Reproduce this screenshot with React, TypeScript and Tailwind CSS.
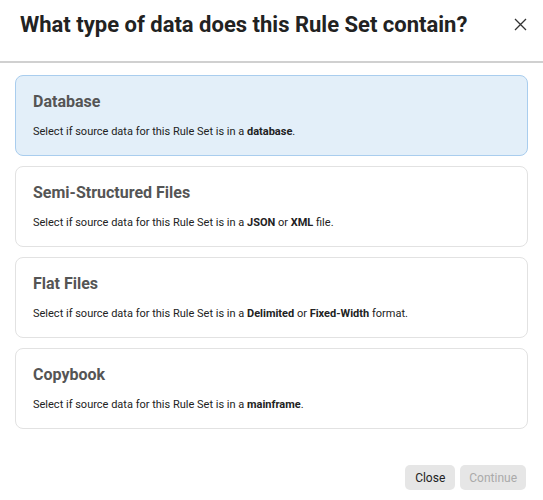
import React, { useState } from 'react';

type Option = {
    id: string;
    title: string;
    body: React.ReactNode;
};

const options: Option[] = [
    {
        id: 'database',
        title: 'Database',
        body: <>Select if source data for this Rule Set is in a <b>database</b>.</>,
    },
    {
        id: 'semi',
        title: 'Semi-Structured Files',
        body: <>Select if source data for this Rule Set is in a <b>JSON</b> or <b>XML</b> file.</>,
    },
    {
        id: 'flat',
        title: 'Flat Files',
        body: <>Select if source data for this Rule Set is in a <b>Delimited</b> or <b>Fixed-Width</b> format.</>,
    },
    {
        id: 'copybook',
        title: 'Copybook',
        body: <>Select if source data for this Rule Set is in a <b>mainframe</b>.</>,
    },
];

export default function App() {
    const [selected, setSelected] = useState('database');

    return (
        <div className="w-[543px] h-[500px] bg-white flex flex-col font-['Roboto',sans-serif] text-[#222]">
            {/* Header */}
            <div className="flex items-center justify-between pl-5 pr-[16px] pb-[12px] h-[63px] shrink-0 border-b-2 border-[#d0d0d0]">
                <h2 className="text-[22px] leading-[28px] font-bold text-[#222] whitespace-nowrap">
                    What type of data does this Rule Set contain?
                </h2>
                <button className="w-[14px] h-[14px] flex items-center justify-center text-[#333]">
                    <svg width="13" height="13" viewBox="0 0 13 13" fill="none" stroke="currentColor" strokeWidth="1.3">
                        <path d="M1 1L12 12M12 1L1 12" />
                    </svg>
                </button>
            </div>

            {/* Options */}
            <div className="flex flex-col gap-[10px] px-[15px] pt-[12px]">
                {options.map((opt) => {
                    const active = opt.id === selected;
                    return (
                        <button
                            key={opt.id}
                            onClick={() => setSelected(opt.id)}
                            className={`flex flex-col items-start justify-start text-left h-[81px] rounded-lg border px-[17px] pt-[16px] ${
                                active ? 'bg-[#e3eff9] border-[#a9cdee]' : 'bg-white border-[#e2e2e2]'
                            }`}
                        >
                            <div className="text-[16px] font-bold text-[#555] leading-[20px]">{opt.title}</div>
                            <div className="text-[11px] text-[#222] leading-[14px] mt-[13px]">{opt.body}</div>
                        </button>
                    );
                })}
            </div>

            {/* Footer */}
            <div className="mt-auto flex justify-end gap-[5px] px-[17px] pb-[10px]">
                <button className="h-[25px] px-[10px] rounded-[5px] bg-[#e6e6e6] text-[12px] text-[#222]">Close</button>
                <button disabled className="h-[25px] px-[9px] rounded-[5px] bg-[#e6e6e6] text-[12px] text-[#aaa]">
                    Continue
                </button>
            </div>
        </div>
    );
}
